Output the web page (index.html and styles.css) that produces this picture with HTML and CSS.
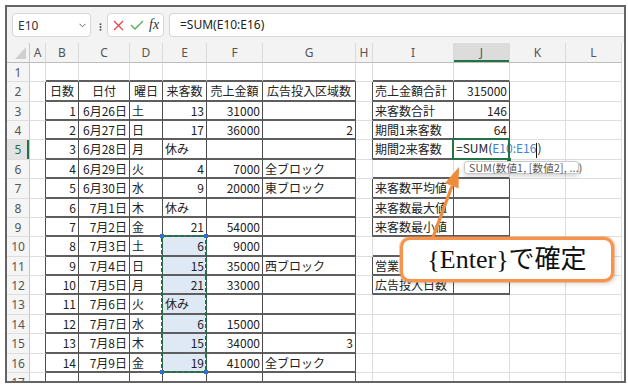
FILE: index.html
```html
<!DOCTYPE html>
<html lang="ja">
<head>
    <meta charset="UTF-8">
    <meta name="viewport" content="width=device-width, initial-scale=1.0">
    <title>SUM関数の入力</title>
    <link rel="stylesheet" href="styles.css">
</head>
<body>
    <div class="frame">
        <div class="toolbar">
            <div class="namebox">
                <span>E10</span>
                <svg class="chev" width="7" height="5" viewBox="0 0 7 5"><path d="M0.5 0.8 L3.5 3.8 L6.5 0.8" fill="none" stroke="#666" stroke-width="1"/></svg>
            </div>
            <svg class="dots" width="3" height="8" viewBox="0 0 3 8"><circle cx="1.5" cy="1.2" r="1"/><circle cx="1.5" cy="4" r="1"/><circle cx="1.5" cy="6.8" r="1"/></svg>
            <div class="btns">
                <svg width="11" height="11" viewBox="0 0 11 11"><path d="M1 1 L10 10 M10 1 L1 10" stroke="#e2474c" stroke-width="1.3"/></svg>
                <svg class="ok" width="14" height="10" viewBox="0 0 14 10"><path d="M1 5 L5 9 L13 1" fill="none" stroke="#52ad58" stroke-width="1.3"/></svg>
                <span class="fx">fx</span>
            </div>
            <div class="formula">=SUM(E10:E16)</div>
        </div>

        <table class="sheet">
            <colgroup>
                <col style="width:23px"><col style="width:16px"><col style="width:33px"><col style="width:51px">
                <col style="width:33px"><col style="width:44px"><col style="width:56px"><col style="width:93px">
                <col style="width:17px"><col style="width:81px"><col style="width:56px"><col style="width:56px">
                <col style="width:56px">
            </colgroup>
            <tr class="head">
                <th class="corner"><svg width="22" height="19" viewBox="0 0 22 19"><path d="M19 4 V16 H8 Z" fill="#d0d0d0"/></svg></th>
                <th class="ch">A</th><th class="ch">B</th><th class="ch">C</th><th class="ch">D</th><th class="ch">E</th><th class="ch">F</th>
                <th class="ch">G</th><th class="ch">H</th><th class="ch">I</th><th class="ch on">J</th><th class="ch">K</th><th class="ch">L</th>
            </tr>
            <tr>
                <th class="rh">1</th><td></td>
                <td class="bt"></td><td class="bt"></td><td class="bt"></td><td class="bt"></td><td class="bt"></td><td class="bt"></td>
                <td></td><td class="bt"></td><td class="bt"></td><td></td><td></td>
            </tr>
            <tr class="tall">
                <th class="rh">2</th><td class="bl"></td>
                <td class="b c">日数</td><td class="b c">日付</td><td class="b c">曜日</td><td class="b c">来客数</td><td class="b c">売上金額</td><td class="b c">広告投入区域数</td>
                <td class="bl"></td><td class="b">売上金額合計</td><td class="b r">315000</td><td></td><td></td>
            </tr>
            <tr>
                <th class="rh">3</th><td class="bl"></td>
                <td class="b r">1</td><td class="b r">6月26日</td><td class="b">土</td><td class="b r">13</td><td class="b r">31000</td><td class="b"></td>
                <td class="bl"></td><td class="b">来客数合計</td><td class="b r">146</td><td></td><td></td>
            </tr>
            <tr>
                <th class="rh">4</th><td class="bl"></td>
                <td class="b r">2</td><td class="b r">6月27日</td><td class="b">日</td><td class="b r">17</td><td class="b r">36000</td><td class="b r">2</td>
                <td class="bl"></td><td class="b">期間1来客数</td><td class="b r">64</td><td></td><td></td>
            </tr>
            <tr class="tall">
                <th class="rh on">5</th><td class="bl"></td>
                <td class="b r">3</td><td class="b r">6月28日</td><td class="b">月</td><td class="b">休み</td><td class="b"></td><td class="b"></td>
                <td class="bl"></td><td class="b">期間2来客数</td>
                <td class="b edit">=SUM(<span class="ref">E10:E16</span><span class="caret"></span>)</td><td></td><td></td>
            </tr>
            <tr>
                <th class="rh">6</th><td class="bl"></td>
                <td class="b r">4</td><td class="b r">6月29日</td><td class="b">火</td><td class="b r">4</td><td class="b r">7000</td><td class="b">全ブロック</td>
                <td></td><td class="bt"></td><td class="bt"></td><td></td><td></td>
            </tr>
            <tr class="tall">
                <th class="rh">7</th><td class="bl"></td>
                <td class="b r">5</td><td class="b r">6月30日</td><td class="b">水</td><td class="b r">9</td><td class="b r">20000</td><td class="b">東ブロック</td>
                <td class="bl"></td><td class="b">来客数平均値</td><td class="b"></td><td></td><td></td>
            </tr>
            <tr>
                <th class="rh">8</th><td class="bl"></td>
                <td class="b r">6</td><td class="b r">7月1日</td><td class="b">木</td><td class="b">休み</td><td class="b"></td><td class="b"></td>
                <td class="bl"></td><td class="b">来客数最大値</td><td class="b"></td><td></td><td></td>
            </tr>
            <tr>
                <th class="rh">9</th><td class="bl"></td>
                <td class="b r">7</td><td class="b r">7月2日</td><td class="b">金</td><td class="b r">21</td><td class="b r">54000</td><td class="b"></td>
                <td class="bl"></td><td class="b">来客数最小値</td><td class="b"></td><td></td><td></td>
            </tr>
            <tr class="tall">
                <th class="rh">10</th><td class="bl"></td>
                <td class="b r">8</td><td class="b r">7月3日</td><td class="b">土</td><td class="b r sel">6</td><td class="b r">9000</td><td class="b"></td>
                <td></td><td class="bt"></td><td class="bt"></td><td></td><td></td>
            </tr>
            <tr>
                <th class="rh">11</th><td class="bl"></td>
                <td class="b r">9</td><td class="b r">7月4日</td><td class="b">日</td><td class="b r sel">15</td><td class="b r">35000</td><td class="b">西ブロック</td>
                <td class="bl"></td><td class="b">営業日数</td><td class="b"></td><td></td><td></td>
            </tr>
            <tr>
                <th class="rh">12</th><td class="bl"></td>
                <td class="b r">10</td><td class="b r">7月5日</td><td class="b">月</td><td class="b r sel">21</td><td class="b r">33000</td><td class="b"></td>
                <td class="bl"></td><td class="b">広告投入日数</td><td class="b"></td><td></td><td></td>
            </tr>
            <tr class="tall">
                <th class="rh">13</th><td class="bl"></td>
                <td class="b r">11</td><td class="b r">7月6日</td><td class="b">火</td><td class="b sel">休み</td><td class="b"></td><td class="b"></td>
                <td></td><td></td><td></td><td></td><td></td>
            </tr>
            <tr>
                <th class="rh">14</th><td class="bl"></td>
                <td class="b r">12</td><td class="b r">7月7日</td><td class="b">水</td><td class="b r sel">6</td><td class="b r">15000</td><td class="b"></td>
                <td></td><td></td><td></td><td></td><td></td>
            </tr>
            <tr class="tall">
                <th class="rh">15</th><td class="bl"></td>
                <td class="b r">13</td><td class="b r">7月8日</td><td class="b">木</td><td class="b r sel">15</td><td class="b r">34000</td><td class="b r">3</td>
                <td></td><td></td><td></td><td></td><td></td>
            </tr>
            <tr>
                <th class="rh">16</th><td class="bl"></td>
                <td class="b r">14</td><td class="b r">7月9日</td><td class="b">金</td><td class="b r sel">19</td><td class="b r">41000</td><td class="b">全ブロック</td>
                <td></td><td></td><td></td><td></td><td></td>
            </tr>
            <tr>
                <th class="rh">17</th><td class="bl"></td>
                <td class="b"></td><td class="b"></td><td class="b"></td><td class="b"></td><td class="b"></td><td class="b"></td>
                <td></td><td></td><td></td><td></td><td></td>
            </tr>
        </table>
    </div>

    <!-- overlays: copy range, active editor, tooltip, annotation -->
    <div class="editbox"></div>
    <div class="tip">SUM(数値1, [数値2], ...)</div>
    <svg class="marks" width="628" height="388" viewBox="0 0 628 388">
        <rect x="162" y="236" width="44" height="136" fill="none" stroke="#1f7244" stroke-width="2" stroke-dasharray="4 2"/>
        <g fill="#2d6fc9">
            <rect x="160" y="234" width="4" height="4"/>
            <rect x="204" y="234" width="4" height="4"/>
            <rect x="160" y="370" width="4" height="4"/>
            <rect x="204" y="370" width="4" height="4"/>
        </g>
        <path d="M432 240 L452 186" stroke="#ef8b3c" stroke-width="3.2"/>
        <polygon points="459,167 445,183 458.5,188.5" fill="#ef8b3c"/>
    </svg>
    <div class="callout">{Enter}で確定</div>
</body>
</html>
```

FILE: styles.css
```css
body {
    margin: 0;
    position: relative;
    background: #fff;
    font-family: "Noto Sans CJK JP", sans-serif;
    color: #222;
}
.frame {
    margin: 5px 0 0 5px;
    width: 617px;
    height: 374px;
    border: 2px solid #646464;
    overflow: hidden;
}

/* formula bar */
.toolbar {
    height: 36px;
    box-sizing: border-box;
    padding: 6px 0 0 5px;
    background: #f3f3f3;
    display: flex;
    align-items: flex-start;
}
.namebox {
    width: 79px;
    height: 24px;
    box-sizing: border-box;
    border: 1px solid #d6d6d6;
    border-radius: 4px;
    background: #fff;
    display: flex;
    align-items: center;
    justify-content: space-between;
    padding: 0 4px 0 5px;
    font: 12px "Noto Sans", sans-serif;
    color: #333;
}
.dots {
    margin: 10px 5px 0 8px;
    fill: #555;
}
.btns {
    width: 57px;
    height: 24px;
    box-sizing: border-box;
    border: 1px solid #d6d6d6;
    border-radius: 4px;
    background: #fff;
    display: flex;
    align-items: center;
    padding-left: 5px;
}
.btns .ok {
    margin-left: 6px;
}
.fx {
    margin-left: 5px;
    font: italic 14px "Liberation Serif", serif;
    color: #333;
}
.formula {
    flex: 1;
    height: 24px;
    margin-left: 5px;
    box-sizing: border-box;
    border: 1px solid #d6d6d6;
    border-right: none;
    border-radius: 4px 0 0 4px;
    background: #fff;
    padding-left: 10px;
    font: 12px/22px "Noto Sans", sans-serif;
    color: #222;
}

/* grid */
.sheet {
    border-spacing: 0;
    table-layout: fixed;
    width: 615px;
}
.sheet tr {
    height: 19px;
}
.sheet tr.tall,
.sheet tr.head {
    height: 20px;
}
.sheet th {
    padding: 0;
    font: 12px "Noto Sans", sans-serif;
    color: #555;
    text-align: center;
}
.sheet td {
    border-right: 1px solid #dedede;
    border-bottom: 1px solid #dedede;
    padding: 0 2px;
    font-size: 12px;
    line-height: 16px;
    white-space: nowrap;
    overflow: hidden;
    vertical-align: middle;
}
.corner {
    background: #f3f3f3;
    border-right: 1px solid #c8c8c8;
    border-bottom: 1px solid #bcbcbc;
}
.corner svg {
    display: block;
}
.ch {
    background: #f3f3f3;
    border-right: 1px solid #dadada;
    border-bottom: 1px solid #bcbcbc;
}
.ch.on {
    background: #dcdcdc;
    box-shadow: inset 0 -2px 0 #217346;
}
.rh {
    background: #f5f5f5;
    border-right: 1px solid #c8c8c8;
    border-bottom: 1px solid #dedede;
}
.rh.on {
    background: #e3e3e3;
    color: #217346;
    box-shadow: inset -2px 0 0 #217346;
}
.sheet td.b {
    border-right-color: #4d4d4d;
    border-bottom: 2px solid #5e5e5e;
}
.sheet td.bl {
    border-right-color: #4d4d4d;
}
.sheet td.bt {
    border-bottom: 2px solid #5e5e5e;
}
.r {
    text-align: right;
}
.c {
    text-align: center;
}
.sel {
    background: #dee9f5;
}
.sheet td.edit {
    overflow: visible;
}
.ref {
    color: #3f86d0;
}
.caret {
    display: inline-block;
    width: 1px;
    height: 15px;
    background: #111;
    vertical-align: middle;
}

/* overlays */
.editbox {
    position: absolute;
    left: 452px;
    top: 138px;
    width: 58px;
    height: 22px;
    box-sizing: border-box;
    border: 2px solid #217346;
}
.editbox::after {
    content: '';
    position: absolute;
    right: -3px;
    bottom: -4px;
    width: 4px;
    height: 4px;
    background: #217346;
}
.tip {
    position: absolute;
    left: 464px;
    top: 161px;
    width: 115px;
    height: 13px;
    box-sizing: border-box;
    padding-left: 4px;
    border: 1px solid #c9c9c9;
    border-radius: 3px;
    background: #fff;
    box-shadow: 0 2px 5px rgba(0, 0, 0, 0.18);
    font-size: 10.5px;
    line-height: 11px;
    letter-spacing: 0.2px;
    color: #555;
    white-space: nowrap;
}
.marks {
    position: absolute;
    left: 0;
    top: 0;
    pointer-events: none;
}
.callout {
    position: absolute;
    left: 400px;
    top: 237px;
    width: 214px;
    height: 45px;
    box-sizing: border-box;
    border: 3px solid #f7934a;
    border-radius: 10px;
    background: #fff;
    box-shadow: 0 0 0 1px rgba(247, 147, 74, 0.45), 2px 2px 4px rgba(0, 0, 0, 0.15);
    display: flex;
    align-items: center;
    justify-content: center;
    font: 26px/26px "Liberation Serif", "Noto Sans CJK JP", serif;
    color: #111;
}
```
